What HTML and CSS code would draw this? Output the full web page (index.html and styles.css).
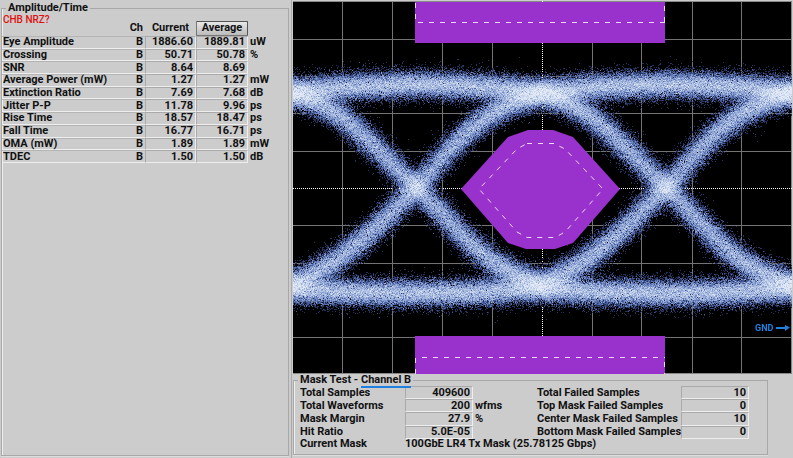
FILE: index.html
```html
<!DOCTYPE html>
<html lang="en">
<head>
  <meta charset="UTF-8" />
  <meta name="viewport" content="width=device-width, initial-scale=1.0"/>
  <title>Eye Diagram - Mask Test</title>
  <link rel="stylesheet" href="styles.css">
</head>
<body>

  <div class="results">
    <fieldset class="group">
      <legend>Amplitude/Time</legend>
      <p class="warning">CHB NRZ?</p>
      <table class="measurements">
        <thead>
          <tr>
            <th class="name"></th>
            <th class="ch">Ch</th>
            <th class="current">Current</th>
            <th class="average"><button type="button" class="btn-average">Average</button></th>
            <th class="unit"></th>
          </tr>
        </thead>
        <tbody>
          <tr><td>Eye Amplitude</td><td class="ch">B</td><td class="value">1886.60</td><td class="value">1889.81</td><td class="unit">uW</td></tr>
          <tr><td>Crossing</td><td class="ch">B</td><td class="value">50.71</td><td class="value">50.78</td><td class="unit">%</td></tr>
          <tr><td>SNR</td><td class="ch">B</td><td class="value">8.64</td><td class="value">8.69</td><td class="unit"></td></tr>
          <tr><td>Average Power (mW)</td><td class="ch">B</td><td class="value">1.27</td><td class="value">1.27</td><td class="unit">mW</td></tr>
          <tr><td>Extinction Ratio</td><td class="ch">B</td><td class="value">7.69</td><td class="value">7.68</td><td class="unit">dB</td></tr>
          <tr><td>Jitter P-P</td><td class="ch">B</td><td class="value">11.78</td><td class="value">9.96</td><td class="unit">ps</td></tr>
          <tr><td>Rise Time</td><td class="ch">B</td><td class="value">18.57</td><td class="value">18.47</td><td class="unit">ps</td></tr>
          <tr><td>Fall Time</td><td class="ch">B</td><td class="value">16.77</td><td class="value">16.71</td><td class="unit">ps</td></tr>
          <tr><td>OMA (mW)</td><td class="ch">B</td><td class="value">1.89</td><td class="value">1.89</td><td class="unit">mW</td></tr>
          <tr><td>TDEC</td><td class="ch">B</td><td class="value">1.50</td><td class="value">1.50</td><td class="unit">dB</td></tr>
        </tbody>
      </table>
    </fieldset>
  </div>

  <div class="display">
    <div class="scope">
      <svg class="grid" viewBox="0 0 499 373">
        <path class="grid-line" d="M49.5 0V373M99.5 0V373M149.5 0V373M199.5 0V373M299.5 0V373M348.5 0V373M399.5 0V373M448.5 0V373M0 38.5H499M0 75.5H499M0 112.5H499M0 150.5H499M0 224.5H499M0 262.5H499M0 300.5H499M0 336.5H499"/>
        <path class="grid-edge" d="M0 0.5H499M0 372.5H499M498.5 0V373"/>
        <path class="grid-axis" d="M249.5 0V373M0 187.5H499"/>
      </svg>
      <canvas id="eye" class="layer" width="499" height="373"></canvas>
      <svg class="layer" viewBox="0 0 499 373">
        <g class="mask">
          <rect x="122" y="1" width="250" height="41"/>
          <rect x="122" y="335" width="250" height="38"/>
          <polygon points="168,188 215,136 235,129 260,129 280,136 327,188 280,242 262,248 233,248 215,242"/>
        </g>
        <g class="margin">
          <path d="M125 21.5H372M129 356.5H372"/>
          <path d="M122.5 2V21M371.5 5V21M122.5 357V373M371.5 361V373"/>
          <polygon points="234,142.5 261,142.5 272,148 310,188 272,231 262,236.5 234,236.5 224,231 186,188 224,148"/>
        </g>
        <text class="gnd" x="462" y="330">GND</text>
        <path class="gnd-arrow" d="M483 326H492V324L497 326.5L492 330V328H483Z"/>
      </svg>
    </div>

    <fieldset class="group mask-test">
      <legend>Mask Test - <a href="#eye" class="channel">Channel B</a></legend>
      <table class="mask-results">
        <tbody>
          <tr><td class="name">Total Samples</td><td class="value">409600</td><td class="unit"></td><td class="name-failed">Total Failed Samples</td><td class="value">10</td></tr>
          <tr><td>Total Waveforms</td><td class="value">200</td><td class="unit">wfms</td><td>Top Mask Failed Samples</td><td class="value">0</td></tr>
          <tr><td>Mask Margin</td><td class="value">27.9</td><td class="unit">%</td><td>Center Mask Failed Samples</td><td class="value">10</td></tr>
          <tr><td>Hit Ratio</td><td class="value">5.0E-05</td><td class="unit"></td><td>Bottom Mask Failed Samples</td><td class="value">0</td></tr>
          <tr><td>Current Mask</td><td colspan="4">100GbE LR4 Tx Mask (25.78125 Gbps)</td></tr>
        </tbody>
      </table>
    </fieldset>
  </div>

<script src="eye.js"></script>
</body>
</html>
```
FILE: styles.css
```css
body {
  margin: 0;
  min-height: 100vh;
  display: grid;
  grid-template-columns: 292px 1fr;
  background-color: #cccccc;
  color: #111;
  font-family: Roboto, "Liberation Sans", Arial, sans-serif;
  font-size: 11px;
  font-weight: bold;
  line-height: 12px;
}

.results {
  display: flex;
  flex-direction: column;
  padding: 2px 2px 2px 1px;
  box-sizing: border-box;
  border-right: 1px solid #aaa;
}

.group {
  margin: 0;
  padding: 0;
  min-width: 0;
  border: 1px solid #a8a8a8;
  box-shadow: inset 1px 0 #eee, 0 1px #ddd;
}

.group legend {
  margin-left: 4px;
  padding: 0 2px;
}

.results .group {
  flex: 1;
}

.warning {
  margin: 0 0 0 1px;
  color: #e01010;
  font-size: 10px;
  font-weight: 500;
  line-height: 12px;
}

table {
  border-collapse: separate;
  border-spacing: 0;
}

th, td {
  padding: 0;
  text-align: left;
  white-space: nowrap;
  line-height: 10px;
}

.measurements {
  width: 272px;
  height: 143px;
  margin-top: -6px;
  table-layout: fixed;
}

.measurements thead tr {
  height: 16px;
}

.measurements td {
  border-top: 1px solid #b4b4b4;
  border-bottom: 1px solid #eee;
}

.measurements td:first-child {
  padding-left: 1px;
}

.measurements .ch {
  width: 14px;
  padding-right: 2px;
  text-align: right;
}

.measurements .current {
  width: 51px;
  text-align: center;
}

.measurements .average {
  width: 52px;
}

.btn-average {
  display: block;
  width: 100%;
  height: 15px;
  padding: 0;
  border: 1px solid;
  border-color: #555 #555 #777 #777;
  border-radius: 1px;
  background: linear-gradient(#e8e8e8, #bbb);
  color: #111;
  font: inherit;
  line-height: 12px;
}

td.value {
  padding-right: 2px;
  border: 1px solid;
  border-color: #aaa #eee #eee #aaa;
  text-align: right;
}

.measurements .unit {
  width: 24px;
  padding-left: 2px;
  border: none;
}

.display {
  padding: 1px 1px 0;
}

.scope {
  position: relative;
  background: #000;
}

.grid {
  display: block;
  width: 100%;
}

.layer {
  position: absolute;
  top: 0;
  left: 0;
  width: 100%;
  height: 100%;
}

.grid-line {
  stroke: #747474;
}

.grid-edge {
  stroke: #888;
}

.grid-axis {
  fill: none;
  stroke: #fff;
  stroke-dasharray: 1 1;
}

.mask {
  fill: #9932cc;
}

.margin {
  fill: none;
  stroke: #f0d8f4;
  stroke-dasharray: 5 6;
}

.gnd,
.gnd-arrow {
  fill: #2080e0;
  font-size: 9px;
}

.mask-test {
  margin-right: 24px;
  padding-bottom: 4px;
}

.channel {
  color: inherit;
  text-decoration: none;
  border-bottom: 2px solid #2080e0;
}

.mask-results {
  height: 64px;
  margin-left: 6px;
}

.mask-results .name {
  width: 105px;
}

.mask-results .value {
  width: 64px;
}

.mask-results .unit {
  width: 62px;
  padding-left: 2px;
}

.mask-results .name-failed {
  width: 142px;
}
```
FILE: eye.js
```javascript
// small seeded generator so the trace looks the same on every load
let seed = 20480;
function random() {
  seed = (seed * 1664525 + 1013904223) % 4294967296;
  return (seed + 1) / 4294967297;
}

function gauss() {
  return Math.sqrt(-2 * Math.log(random())) * Math.cos(2 * Math.PI * random());
}

// [offset from crossing, y]
const paths = [
  [[-150, 90], [-124, 94], [-100, 102], [-76, 115], [-59, 130], [-39, 149], [-16, 172], [0, 187], [31, 219], [51, 240], [74, 260], [101, 275], [124, 283], [150, 288]],
  [[-150, 288], [-124, 283], [-109, 277], [-83, 262], [-56, 241], [-29, 216], [0, 187], [17, 168], [34, 148], [54, 129], [74, 114], [97, 102], [124, 94], [150, 90]],
  [[-150, 92], [-124, 91], [-60, 86], [0, 84], [60, 86], [124, 91], [150, 92]],
  [[-150, 287], [-124, 289], [-60, 292], [0, 293], [60, 292], [124, 288], [150, 287]]
];

function level(path, u) {
  let i = 1;
  while (i < path.length - 1 && path[i][0] < u) i++;
  const [x0, y0] = path[i - 1];
  const [x1, y1] = path[i];
  return y0 + (y1 - y0) * (u - x0) / (x1 - x0);
}

// hit count -> colour
const colors = [
  [0, 0, 0], [36, 50, 92], [66, 88, 146], [92, 116, 176], [114, 136, 194],
  [132, 153, 205], [146, 166, 212], [158, 177, 218], [168, 187, 223],
  [178, 195, 228], [187, 203, 232], [195, 210, 235], [203, 216, 238],
  [210, 221, 240], [216, 226, 243], [222, 230, 245], [228, 235, 247]
];

function drawEye() {
  const canvas = document.getElementById("eye");
  const ctx = canvas.getContext("2d");
  const w = canvas.width;
  const h = canvas.height;
  const hits = new Uint16Array(w * h);

  for (let x = 0; x < w; x++) {
    const crossing = x < 249 ? 123 : 373;
    paths.forEach((path) => {
      for (let n = 0; n < 150; n++) {
        const y = Math.round(level(path, x - crossing + gauss() * 6) - 1 + gauss() * 7);
        if (y >= 0 && y < h) hits[y * w + x]++;
      }
    });
  }

  const image = ctx.createImageData(w, h);
  hits.forEach((count, i) => {
    if (count === 0) return;
    const c = colors[Math.min(count, colors.length - 1)];
    image.data.set([c[0], c[1], c[2], 255], i * 4);
  });
  ctx.putImageData(image, 0, 0);
}

drawEye();
```
